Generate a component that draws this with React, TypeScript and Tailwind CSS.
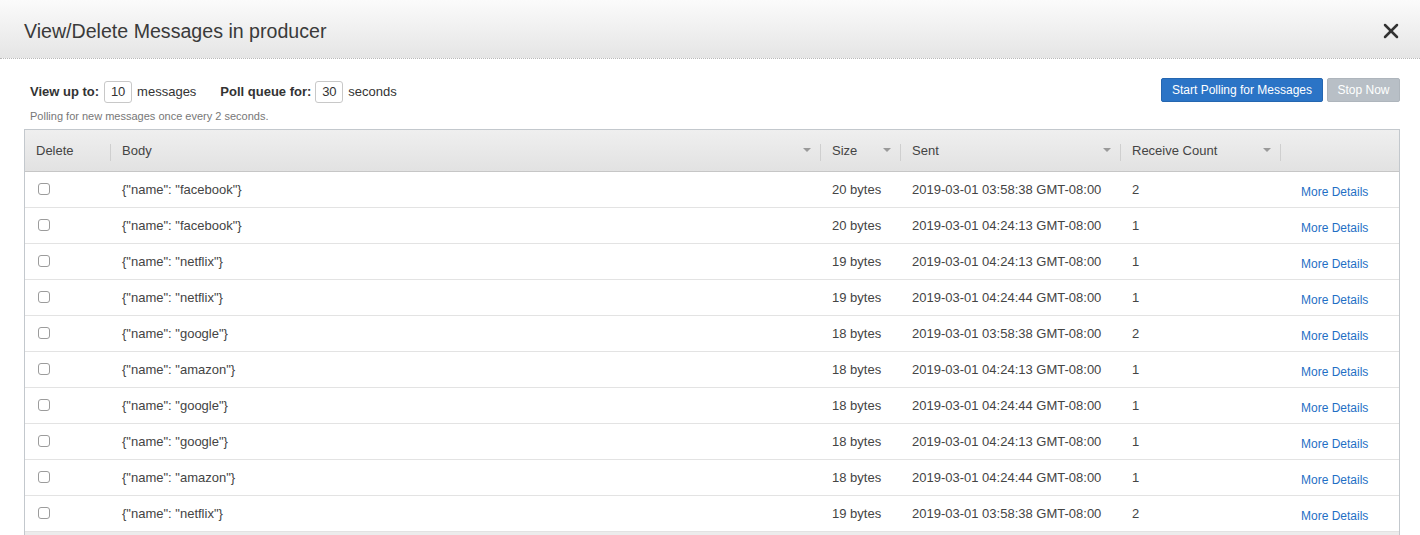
import { X } from "lucide-react";

const rows = [
  { body: '{"name": "facebook"}', size: "20 bytes", sent: "2019-03-01 03:58:38 GMT-08:00", count: 2 },
  { body: '{"name": "facebook"}', size: "20 bytes", sent: "2019-03-01 04:24:13 GMT-08:00", count: 1 },
  { body: '{"name": "netflix"}', size: "19 bytes", sent: "2019-03-01 04:24:13 GMT-08:00", count: 1 },
  { body: '{"name": "netflix"}', size: "19 bytes", sent: "2019-03-01 04:24:44 GMT-08:00", count: 1 },
  { body: '{"name": "google"}', size: "18 bytes", sent: "2019-03-01 03:58:38 GMT-08:00", count: 2 },
  { body: '{"name": "amazon"}', size: "18 bytes", sent: "2019-03-01 04:24:13 GMT-08:00", count: 1 },
  { body: '{"name": "google"}', size: "18 bytes", sent: "2019-03-01 04:24:44 GMT-08:00", count: 1 },
  { body: '{"name": "google"}', size: "18 bytes", sent: "2019-03-01 04:24:13 GMT-08:00", count: 1 },
  { body: '{"name": "amazon"}', size: "18 bytes", sent: "2019-03-01 04:24:44 GMT-08:00", count: 1 },
  { body: '{"name": "netflix"}', size: "19 bytes", sent: "2019-03-01 03:58:38 GMT-08:00", count: 2 },
];

const cols = "grid grid-cols-[86px_710px_80px_220px_160px_120px]";

function HeadCell({ label, sortable, divider = true }: { label: string; sortable?: boolean; divider?: boolean }) {
  return (
    <div className="relative flex items-center pl-[11px] pt-[1px] h-full">
      <span>{label}</span>
      {sortable && (
        <span className="absolute right-[10px] top-1/2 -translate-y-1/2 w-0 h-0 border-l-[4px] border-r-[4px] border-t-[4px] border-l-transparent border-r-transparent border-t-[#9a9a9a]" />
      )}
      {divider && <span className="absolute right-0 top-[14px] bottom-[10px] w-px bg-[#cfcfcf]" />}
    </div>
  );
}

export default function App() {
  return (
    <div className="w-[1420px] h-[535px] overflow-hidden bg-white text-[#444] font-['Liberation_Sans',Arial,sans-serif]">
      {/* dialog header */}
      <div className="h-[59px] flex items-center justify-between pl-6 pr-[17px] bg-gradient-to-b from-[#fbfbfb] to-[#e5e5e5] border-b border-dotted border-[#b9b9b9]">
        <h1 className="text-[19.6px] text-[#3a3a3a] mt-[5px]">View/Delete Messages in producer</h1>
        <X size={24} strokeWidth={2.5} className="text-[#333] mt-[3px]" />
      </div>

      <div className="pl-6 pr-5">
        {/* controls */}
        <div className="flex items-start justify-between pt-[21px]">
          <div className="pl-[6px]">
            <div className="flex items-center text-[13px] text-[#333] h-6">
              <span className="font-bold">View up to:</span>
              <span className="ml-[5px] w-[28px] h-[22px] border border-[#c8c8c8] rounded-[3px] flex items-center justify-center">10</span>
              <span className="ml-[5px]">messages</span>
              <span className="font-bold ml-[24px]">Poll queue for:</span>
              <span className="ml-[4px] w-[28px] h-[22px] border border-[#c8c8c8] rounded-[3px] flex items-center justify-center">30</span>
              <span className="ml-[5px]">seconds</span>
            </div>
            <p className="text-[11px] text-[#777] mt-[4px]">Polling for new messages once every 2 seconds.</p>
          </div>
          <div className="flex gap-[4px] mt-[-2px]">
            <button className="h-[24px] w-[162px] rounded-[2px] bg-[#2b74c6] border border-[#2566b0] text-white text-[12px]">
              Start Polling for Messages
            </button>
            <button className="h-[24px] w-[73px] rounded-[2px] bg-[#b8bfc6] border border-[#aeb5bc] text-white text-[12px]">
              Stop Now
            </button>
          </div>
        </div>

        {/* table */}
        <div className="mt-[4px] border border-[#c3c8cd] text-[13px]">
          <div className={`${cols} h-[42px] bg-gradient-to-b from-[#efefef] to-[#e2e2e2] border-b border-[#c6c6c6] text-[#444]`}>
            <HeadCell label="Delete" />
            <HeadCell label="Body" sortable />
            <HeadCell label="Size" sortable />
            <HeadCell label="Sent" sortable />
            <HeadCell label="Receive Count" sortable />
            <div />
          </div>
          {rows.map((r, i) => (
            <div key={i} className={`${cols} h-[36px] items-center border-b border-[#e3e3e3] text-[#444]`}>
              <div className="pl-[13px] flex items-center">
                <span className="w-[12px] h-[12px] rounded-[3px] border border-[#9c9c9c] bg-white" />
              </div>
              <div className="pl-[11px] pt-[1px]">{r.body}</div>
              <div className="pl-[11px] pt-[1px]">{r.size}</div>
              <div className="pl-[11px] pt-[1px]">{r.sent}</div>
              <div className="pl-[11px] pt-[1px]">{r.count}</div>
              <div className="pl-[20px] pt-[5px] text-[12px] text-[#1f6fc5]">More Details</div>
            </div>
          ))}
          <div className="h-[10px] bg-[#ececec]" />
        </div>
      </div>
    </div>
  );
}
